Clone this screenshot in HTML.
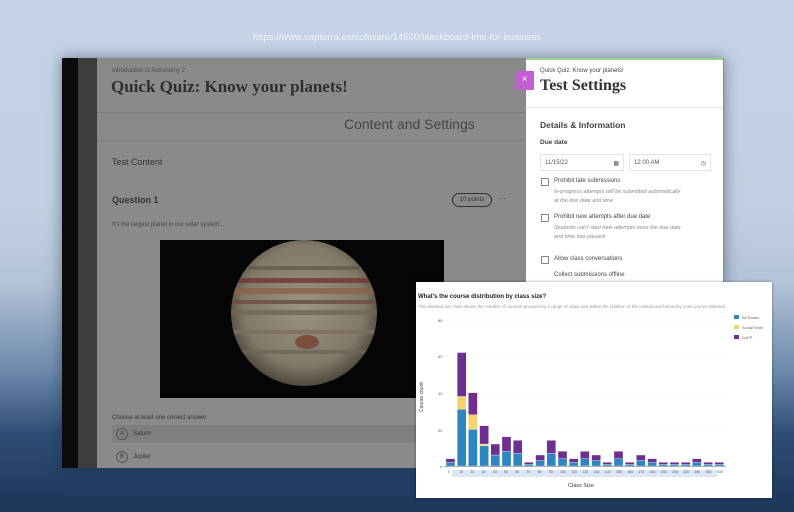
<!DOCTYPE html>
<html><head><meta charset="utf-8"><style>
*{margin:0;padding:0;box-sizing:border-box}
body{width:794px;height:512px;overflow:hidden;position:relative;font-family:"Liberation Sans",sans-serif;
background:linear-gradient(180deg,#c6d3e7 0%,#c3d0e3 40%,#b4c4d8 55%,#6f8cad 72%,#2e4d74 85%,#1d3658 100%);}
.abs{position:absolute}
.url{left:0;width:794px;top:32px;text-align:center;color:#f2f5fa;font-size:9.5px}
.win{left:62px;top:58px;width:662px;height:410px;background:#8a8a8a;box-shadow:0 0 14px rgba(30,40,60,.5)}
.serif{font-family:"Liberation Serif",serif}
.rp{left:526px;top:58px;width:197px;height:230px;background:#fff;border-top:2px solid #9bd08a}
.t{color:#3a3a3a}
</style></head><body>
<div class="abs url">https://www.capterra.es/software/14500/blackboard-lms-for-business</div>
<div class="abs win"></div>
<div class="abs" style="left:62px;top:58px;width:16px;height:410px;background:#0b0b0b"></div>
<div class="abs" style="left:78px;top:58px;width:19px;height:410px;background:#3c3c3c"></div>
<div class="abs" style="left:97px;top:58px;width:429px;height:410px;background:#8a8a8a"></div>
<div class="abs" style="left:97px;top:112px;width:429px;height:1px;background:#7a7a7a"></div>
<div class="abs" style="left:97px;top:140px;width:429px;height:1px;background:#7d7d7d"></div>
<div class="abs t" style="left:112px;top:68px;font-size:6px;color:#4a4a4a">Introduction to Astronomy 2</div>
<div class="abs serif" style="left:111px;top:77px;font-size:17px;font-weight:bold;color:#2e2e2e">Quick Quiz: Know your planets!</div>
<div class="abs" style="left:344px;top:116px;font-size:14px;color:#444">Content and Settings</div>
<div class="abs" style="left:112px;top:157px;font-size:9px;color:#333">Test Content</div>
<div class="abs" style="left:112px;top:195px;font-size:9px;color:#333;font-weight:bold">Question 1</div>
<div class="abs" style="left:452px;top:193px;width:40px;height:14px;border:1px solid #333;border-radius:7px;font-size:6px;color:#333;text-align:center;line-height:12px">10 points</div>
<div class="abs" style="left:498px;top:194px;font-size:8px;color:#333">···</div>
<div class="abs" style="left:112px;top:222px;font-size:6px;color:#444">It's the largest planet in our solar system...</div>
<div class="abs" style="left:160px;top:240px;width:284px;height:158px;background:#050505"></div>
<svg class="abs" style="left:229px;top:238px;filter:brightness(.72) saturate(.8)" width="150" height="150" viewBox="0 0 150 150">
<defs><radialGradient id="j" cx="50%" cy="45%" r="55%"><stop offset="0" stop-color="#d9cdb0"/><stop offset=".75" stop-color="#b7a88a"/><stop offset="1" stop-color="#6e6350"/></radialGradient>
<clipPath id="c"><circle cx="75" cy="75" r="73"/></clipPath></defs>
<circle cx="75" cy="75" r="73" fill="url(#j)"/>
<g clip-path="url(#c)" opacity=".8">
<rect x="0" y="28" width="150" height="4" fill="#8d7d66"/>
<rect x="0" y="40" width="150" height="5" fill="#a8483a"/>
<rect x="0" y="50" width="150" height="6" fill="#c8865a"/>
<rect x="0" y="62" width="150" height="4" fill="#9b6a4e"/>
<rect x="0" y="72" width="150" height="5" fill="#a88a70"/>
<rect x="0" y="92" width="150" height="4" fill="#b3987a"/>
<rect x="0" y="112" width="150" height="4" fill="#9a8c76"/>
<ellipse cx="78" cy="104" rx="12" ry="7" fill="#b5583e"/>
</g></svg>
<div class="abs" style="left:112px;top:415px;font-size:6px;color:#333">Choose at least one correct answer</div>
<div class="abs" style="left:112px;top:425px;width:414px;height:18px;background:#7f7f7f"></div>
<div class="abs" style="left:116px;top:428px;width:12px;height:12px;border:1px solid #555;border-radius:6px;font-size:6px;text-align:center;line-height:10px;color:#333">A</div>
<div class="abs" style="left:133px;top:431px;font-size:6px;color:#333">Saturn</div>
<div class="abs" style="left:112px;top:449px;width:414px;height:18px;background:#8a8a8a"></div>
<div class="abs" style="left:116px;top:451px;width:12px;height:12px;border:1px solid #555;border-radius:6px;font-size:6px;text-align:center;line-height:10px;color:#333">B</div>
<div class="abs" style="left:133px;top:454px;font-size:6px;color:#333">Jupiter</div>

<div class="abs rp"></div>
<div class="abs" style="left:515px;top:71px;width:19px;height:19px;background:#c25fd0;color:#fff;font-size:10px;text-align:center;line-height:18px">×</div>
<div class="abs" style="left:540px;top:68px;font-size:6px;color:#444">Quick Quiz: Know your planets!</div>
<div class="abs serif" style="left:540px;top:77px;font-size:16px;font-weight:bold;color:#333">Test Settings</div>
<div class="abs" style="left:526px;top:107px;width:197px;height:1px;background:#e6e6e6"></div>
<div class="abs" style="left:540px;top:120px;font-size:8.5px;font-weight:bold;color:#444">Details &amp; Information</div>
<div class="abs" style="left:540px;top:139px;font-size:6.5px;font-weight:bold;color:#444">Due date</div>
<div class="abs" style="left:540px;top:154px;width:84px;height:17px;border:1px solid #e4e4e4;font-size:6px;color:#555;padding:5px 4px">11/15/22<span style="float:right">▦</span></div>
<div class="abs" style="left:629px;top:154px;width:82px;height:17px;border:1px solid #e4e4e4;font-size:6px;color:#555;padding:5px 4px">12:00 AM<span style="float:right">◷</span></div>
<div class="abs" style="left:541px;top:178px;width:8px;height:8px;border:1px solid #888"></div>
<div class="abs" style="left:554px;top:178px;font-size:6px;color:#444">Prohibit late submissions</div>
<div class="abs" style="left:554px;top:188px;font-size:5.5px;color:#888;font-style:italic;line-height:9px">In-progress attempts will be submitted automatically<br>at the due date and time</div>
<div class="abs" style="left:541px;top:214px;width:8px;height:8px;border:1px solid #888"></div>
<div class="abs" style="left:554px;top:214px;font-size:6px;color:#444">Prohibit new attempts after due date</div>
<div class="abs" style="left:554px;top:224px;font-size:5.5px;color:#888;font-style:italic;line-height:9px">Students can't start new attempts once the due date<br>and time has passed</div>
<div class="abs" style="left:541px;top:256px;width:8px;height:8px;border:1px solid #888"></div>
<div class="abs" style="left:554px;top:256px;font-size:6px;color:#444">Allow class conversations</div>
<div class="abs" style="left:554px;top:272px;font-size:6px;color:#444">Collect submissions offline</div>

<div class="abs" style="left:416px;top:282px;width:356px;height:216px;background:#fff;box-shadow:0 0 3px rgba(0,0,0,.4)"></div>
<div class="abs" style="left:418px;top:294px;font-size:6px;font-weight:bold;color:#222">What's the course distribution by class size?</div>
<div class="abs" style="left:418px;top:304px;font-size:4.5px;color:#999">This stacked bar chart shows the number of courses grouped by a range of class size within the children of the institutional hierarchy node you've selected.</div>
<svg class="abs" style="left:416px;top:282px" width="356" height="216" viewBox="416 282 356 216" font-family="Liberation Sans" font-size="4">
<g stroke="#f0f0f0" stroke-width=".5"><line x1="444" x2="726" y1="320" y2="320"/><line x1="444" x2="726" y1="356" y2="356"/><line x1="444" x2="726" y1="393" y2="393"/><line x1="444" x2="726" y1="430" y2="430"/></g>
<g fill="#555"><text x="438" y="322">80</text><text x="438" y="358">60</text><text x="438" y="395">40</text><text x="438" y="432">20</text><text x="440" y="468">0</text></g>
<text x="0" y="0" font-size="5" fill="#333" transform="translate(423,412) rotate(-90)">Course count</text>
<line x1="444" x2="726" y1="466.5" y2="466.5" stroke="#444" stroke-width=".6"/>
<rect x="452" y="470" width="265" height="7" fill="#dbe7f5"/>
<text x="568" y="487" font-size="5.5" fill="#333">Class Size</text>
<g id="bars"></g>
<rect x="734" y="315" width="5" height="4" fill="#2e86c1"/><text x="742" y="319" fill="#666">All Nodes</text>
<rect x="734" y="325" width="5" height="4" fill="#f5d36b"/><text x="742" y="329" fill="#666">Social Work</text>
<rect x="734" y="335" width="5" height="4" fill="#6e2f8f"/><text x="742" y="339" fill="#666">GoFP</text>
</svg>
<script>
var d=[[2,0,2],[31,7,24],[20,8,12],[11,1,10],[6,0,6],[8,0,8],[7,0,7],[1,0,1],[3,0,3],[7,0,7],[4,0,4],[2,0,2],[4,0,4],[3,0,3],[1,0,1],[4,0,4],[1,0,1],[3,0,3],[2,0,2],[1,0,1],[1,0,1],[1,0,1],[2,0,2],[1,0,1],[1,0,1]];
var labs=["0","10","20","30","40","50","60","70","80","90","100","110","120","130","140","150","160","170","180","190","200","220","260","300","340"];
var s="",k=1.83,c=["#2e86c1","#f5d36b","#6e2f8f"];
d.forEach(function(b,i){var x=446+i*11.2,y=466;for(var j=0;j<3;j++){var h=b[j]*k;if(h>0){y-=h;s+='<rect x="'+x+'" y="'+y+'" width="9" height="'+h+'" fill="'+c[j]+'" stroke="#fff" stroke-width=".3"/>';}}
s+='<text x="'+(x+2)+'" y="473" font-size="3.5" fill="#555">'+labs[i]+'</text>';});
document.getElementById("bars").innerHTML=s;
</script>
</body></html>
